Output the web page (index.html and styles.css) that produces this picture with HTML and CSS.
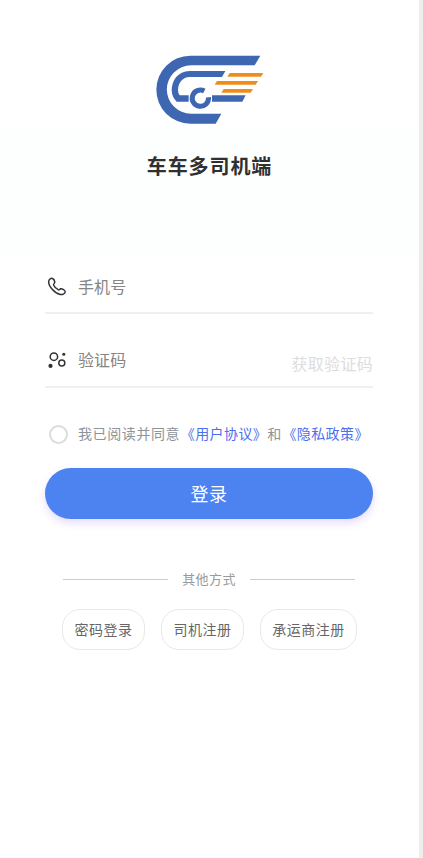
FILE: index.html
```html
<!DOCTYPE html>
<html lang="zh-CN">
<head>
<meta charset="utf-8">
<title>车车多司机端</title>
<link rel="stylesheet" href="styles.css">
</head>
<body>
<main class="page">
  <header class="brand">
    <svg class="logo" viewBox="0 0 390 270" aria-hidden="true">
      <g fill="#3f66b0">
        <path d="M346 32H136A102 102 0 0 0 136 236H212L229 206H138A72.500 72.500 0 0 1 138 61H329Z"/>
        <path d="M241 78H134C98 79 80 106 80 136Q81 157 95 170H131V151H104Q99 146 99 134C100 112 113 97 134 96H231Z"/>
        <path d="M201 151H302L292 170H201Z"/>
      </g>
      <path d="M190.500 157A24.500 24.500 0 1 1 178 138" fill="none" stroke="#3f66b0" stroke-width="15"/>
      <g fill="#f08c1c">
        <path d="M254 84H355L348 95H247Z"/>
        <path d="M216 108H339L332 119H209Z"/>
        <path d="M236 132H324L317 143H229Z"/>
      </g>
    </svg>
    <h1 class="title">车车多司机端</h1>
  </header>
  <form class="form">
    <label class="field">
      <svg class="icon" viewBox="0 0 20 20" aria-hidden="true">
        <path d="M5.500 1.500C4.100 .9 2 2.100 1.700 4.300C1.100 8.600 7.200 16.100 13.200 17.500C15.500 18 17.800 16.800 18.200 14.900C18.400 13.600 14.900 11.300 13.700 11.800C12.600 12.300 12.400 13.300 11.500 12.900C9.300 11.900 7.300 9.700 6.600 7.900C6.300 7 7.800 6.400 7.800 5.100C7.700 3.800 6.600 2 5.500 1.500Z" fill="none" stroke="#333" stroke-width="1.500" stroke-linejoin="round"/>
      </svg>
      <span class="placeholder">手机号</span>
    </label>
    <label class="field field-code">
      <svg class="icon" viewBox="0 0 20 20" aria-hidden="true">
        <g fill="none" stroke="#333" stroke-width="1.500"><circle cx="6.900" cy="6.700" r="3.700"/><circle cx="14.800" cy="13.100" r="3"/></g>
        <g fill="#333"><circle cx="3.500" cy="15.900" r="2.100"/><circle cx="16.800" cy="4.300" r="1.500"/></g>
      </svg>
      <span class="placeholder">验证码</span>
      <span class="send-code">获取验证码</span>
    </label>
    <div class="agreement">
      <span class="radio"></span>
      <span class="terms">我已阅读并同意<a>《用户协议》</a>和<a>《隐私政策》</a></span>
    </div>
    <button class="submit" type="button">登录</button>
  </form>
  <div class="divider"><span>其他方式</span></div>
  <nav class="options">
    <a class="option">密码登录</a>
    <a class="option">司机注册</a>
    <a class="option option-wide">承运商注册</a>
  </nav>
</main>
</body>
</html>
```
FILE: styles.css
```css
* { box-sizing: border-box; }
body {
  margin: 0;
  background: #eee;
  font-family: "Noto Sans CJK SC", sans-serif;
}
.page {
  width: 419px;
  height: 858px;
  padding-top: 45px;
  background: linear-gradient(#fff 0, #fdfefe 220px, #fff 300px);
}
.brand {
  display: flex;
  flex-direction: column;
  align-items: center;
}
.logo { width: 130px; height: 90px; }
.title {
  margin: 16px 0 0;
  font-size: 20px;
  line-height: 30px;
  letter-spacing: 0.9px;
  font-weight: 700;
  color: #303030;
}
.form {
  width: 328px;
  margin: 79px 0 0 45px;
}
.field {
  display: flex;
  align-items: center;
  height: 54px;
  padding: 0 0 1px 2px;
  border-bottom: 2px solid #f0f0f0;
}
.field-code {
  height: 56px;
  margin-top: 18px;
  padding-bottom: 1px;
}
.icon { width: 20px; height: 20px; margin: 2px 11px 0 0; }
.placeholder {
  font-size: 16px;
  line-height: 24px;
  letter-spacing: 0.1px;
  color: #858585;
}
.send-code {
  margin: 8px 0 0 auto;
  font-size: 16px;
  line-height: 24px;
  letter-spacing: 0.3px;
  color: #ddd;
}
.agreement {
  display: flex;
  align-items: center;
  margin-top: 35px;
  height: 22px;
  padding-left: 4px;
}
.radio {
  width: 19px;
  height: 19px;
  margin-right: 10px;
  border: 2px solid #dcdcdc;
  border-radius: 50%;
}
.terms {
  margin-top: -2px;
  font-size: 14px;
  line-height: 22px;
  letter-spacing: 0.6px;
  white-space: nowrap;
  color: #8e9499;
}
.terms a {
  margin-left: 0.6px;
  letter-spacing: 0.4px;
  color: #4a70ee;
}
.submit {
  display: block;
  width: 328px;
  height: 51px;
  margin-top: 23px;
  padding: 0 0 2px;
  border: 0;
  border-radius: 26px;
  background: #4d82f1;
  box-shadow: 0 4px 8px rgba(120, 80, 245, 0.2);
  font: 400 18px/26px "Noto Sans CJK SC", sans-serif;
  letter-spacing: 0.5px;
  color: #fff;
}
.divider {
  display: flex;
  align-items: center;
  gap: 14px;
  width: 292px;
  height: 20px;
  margin: 50px 0 0 63px;
  font-size: 13px;
  line-height: 20px;
  letter-spacing: 0.4px;
  color: #999;
}
.divider span { margin-top: -1px; }
.divider::before, .divider::after {
  content: "";
  flex: 1;
  height: 1px;
  background: #ccc;
}
.options {
  display: flex;
  gap: 16px;
  margin: 20px 0 0 62px;
}
.option {
  width: 83px;
  height: 41px;
  border: 1px solid #e8e8e8;
  border-radius: 18px;
  text-align: center;
  font-size: 14px;
  line-height: 38px;
  letter-spacing: 0.5px;
  white-space: nowrap;
  color: #666;
}
.option-wide { width: 97px; }
```
